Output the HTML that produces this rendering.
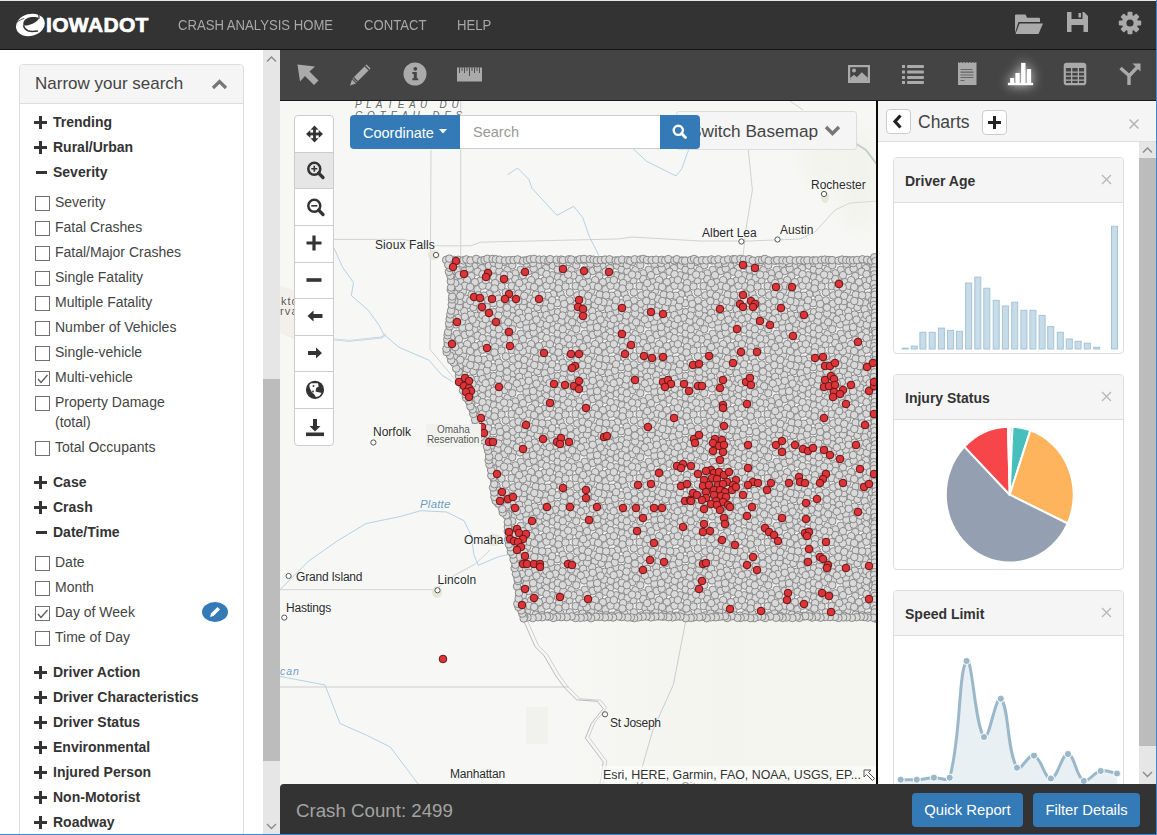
<!DOCTYPE html>
<html><head><meta charset="utf-8">
<style>
*{box-sizing:border-box}
html,body{margin:0;padding:0;width:1157px;height:835px;overflow:hidden;background:#fff;font-family:"Liberation Sans",sans-serif;color:#333}
.abs{position:absolute}
#topline{left:0;top:0;width:1157px;height:1px;background:#e6e6e6}
#header{left:0;top:1px;width:1156px;height:49px;background:#333;border-bottom:1px solid #141414}
#rline{left:1156px;top:0;width:1px;height:835px;background:#3d86d6}
#bline{left:0;top:834px;width:1157px;height:1px;background:#3d86d6}
.nav{top:16px;font-size:15px;line-height:17px;color:#a8a8a8;white-space:nowrap;transform:scaleX(0.875);transform-origin:0 0}
#toolbar{left:280px;top:50px;width:876px;height:51px;background:#444;border-bottom:1px solid #1a1a1a}
#sidebar{left:0;top:50px;width:263px;height:784px;background:#fff}
#sscroll{left:263px;top:50px;width:17px;height:784px;background:#e6e6e6}
#sthumb{left:263px;top:379px;width:17px;height:382px;background:#bcbcbc}
#panel{left:19px;top:64px;width:225px;height:790px;border:1px solid #ddd;border-radius:4px;background:#fff}
#phead{left:20px;top:65px;width:223px;height:39px;background:#f5f5f5;border-bottom:1px solid #ddd;border-radius:3px 3px 0 0}
.grp{font-size:14px;line-height:16px;font-weight:bold;color:#333;white-space:nowrap}
.chk{font-size:14px;line-height:16px;color:#444;white-space:nowrap}
.cb{width:15px;height:15px;border:1px solid #707070;background:#fff}
#map{left:280px;top:101px;width:596px;height:684px;background:#f7f7f5;overflow:hidden}
#rpanel{left:876px;top:101px;width:280px;height:684px;background:#fff;border-left:2px solid #0a0a0a}
#bottom{left:280px;top:784px;width:876px;height:50px;background:#333;border-radius:4px 0 0 0}
.tool{fill:#a9a9a9}
.mbtn{left:294px;width:40px;height:37px;background:#fff;border:1px solid #ccc}
.chart{left:893px;width:231px;background:#fff;border:1px solid #ddd;border-radius:4px;overflow:hidden}
.chead{height:45px;background:#f5f5f5;border-bottom:1px solid #ddd;position:relative}
.ctitle{position:absolute;left:11px;top:15px;font-size:14px;line-height:16px;font-weight:bold;color:#333;white-space:nowrap}
.cx{position:absolute;right:11px;top:16px}
.btn{top:793px;height:34px;background:#337ab7;border-radius:4px;color:#fff;font-size:14.8px;line-height:34px;text-align:center;white-space:nowrap}
</style></head><body>
<div id="topline" class="abs"></div>
<div id="header" class="abs"></div>
<svg class="abs" style="left:14px;top:12px" width="33" height="27" viewBox="0 0 33 27">
<ellipse cx="16.4" cy="12.95" rx="14.6" ry="11" transform="rotate(-15 16.4 12.95)" fill="#fff"/>
<path d="M9.4 13.6 C8.8 9 11 6.5 16 5.3 C19 4.8 23 5 25 5.9 C24.2 8 22.5 9.6 20 10.9 C17.5 12.3 14.5 13.4 9.4 13.6 Z" fill="#333"/>
<path d="M9.4 13.4 C10 15.5 11.5 17.8 14 18.8 C16.5 19.7 20 19.5 24 18.9" fill="none" stroke="#333" stroke-width="1.5"/>
<path d="M2 11.1 C5 8.5 7.5 7 10.3 6.4" fill="none" stroke="#333" stroke-width="0.8"/>
<path d="M24.1 1.8 C25.2 3.5 25.3 5.2 25 6.8" fill="none" stroke="#333" stroke-width="1.1"/>
</svg>
<div class="abs" style="left:46px;top:13px;font-size:21px;line-height:23px;font-weight:bold;color:#fff;letter-spacing:0.35px;white-space:nowrap;-webkit-text-stroke:0.7px #fff">IOWADOT</div>

<div class="abs nav" style="left:178px">CRASH ANALYSIS HOME</div>
<div class="abs nav" style="left:364px">CONTACT</div>
<div class="abs nav" style="left:457px">HELP</div>
<svg class="abs" style="left:1014px;top:13px" width="30" height="22" viewBox="0 0 30 22">
<path d="M1 2.5 L1 20 L4.5 9 L26 9 L26 6 C26 5.2 25.5 4.8 24.8 4.8 L13 4.8 L11.5 1.5 L2.2 1.5 C1.5 1.5 1 2 1 2.5 Z" fill="#aaa"/>
<path d="M5.5 10.5 L29 10.5 L24.5 21 L1.5 21 Z" fill="#aaa"/>
</svg>
<svg class="abs" style="left:1066px;top:11px" width="23" height="22" viewBox="0 0 23 22">
<path d="M1 1 L18 1 L22 5 L22 21 L1 21 Z" fill="#aaa"/>
<rect x="5.5" y="1" width="11" height="7" fill="#333"/>
<rect x="12.5" y="2" width="2.5" height="4.5" fill="#aaa"/>
<rect x="5.5" y="14" width="12" height="7" fill="#333"/>
</svg>
<svg class="abs" style="left:1118px;top:11px" width="24" height="24" viewBox="0 0 24 24">
<g fill="#aaa"><circle cx="12" cy="12" r="8"/>
<g id="teeth"><rect x="9.5" y="0.8" width="5" height="5" rx="1"/><rect x="9.5" y="18.2" width="5" height="5" rx="1"/><rect x="0.8" y="9.5" width="5" height="5" rx="1"/><rect x="18.2" y="9.5" width="5" height="5" rx="1"/></g>
<g transform="rotate(45 12 12)"><rect x="9.5" y="0.8" width="5" height="5" rx="1"/><rect x="9.5" y="18.2" width="5" height="5" rx="1"/><rect x="0.8" y="9.5" width="5" height="5" rx="1"/><rect x="18.2" y="9.5" width="5" height="5" rx="1"/></g>
</g><circle cx="12" cy="12" r="3.6" fill="#333"/>
</svg>


<div id="sidebar" class="abs"></div>
<div id="panel" class="abs"></div>
<div id="phead" class="abs"></div>
<div class="abs" style="left:35px;top:74px;font-size:17px;line-height:20px;color:#444;white-space:nowrap">Narrow your search</div>
<svg class="abs" style="left:211px;top:78px" width="17" height="12" viewBox="0 0 17 12"><path d="M2 10 L8.5 3.5 L15 10" fill="none" stroke="#777" stroke-width="3.2"/></svg>
<svg class="abs" style="left:34px;top:115.5px" width="13" height="13" viewBox="0 0 13 13"><rect x="0" y="5" width="13" height="3" fill="#333"/><rect x="5" y="0" width="3" height="13" fill="#333"/></svg><div class="abs grp" style="left:53px;top:114px">Trending</div>
<svg class="abs" style="left:34px;top:140.5px" width="13" height="13" viewBox="0 0 13 13"><rect x="0" y="5" width="13" height="3" fill="#333"/><rect x="5" y="0" width="3" height="13" fill="#333"/></svg><div class="abs grp" style="left:53px;top:139px">Rural/Urban</div>
<svg class="abs" style="left:36px;top:165.5px" width="11" height="13" viewBox="0 0 11 13"><rect x="0" y="5" width="11" height="3" fill="#333"/></svg><div class="abs grp" style="left:53px;top:164px">Severity</div>
<div class="abs cb" style="left:35px;top:196px"></div><div class="abs chk" style="left:55px;top:194px">Severity</div>
<div class="abs cb" style="left:35px;top:221px"></div><div class="abs chk" style="left:55px;top:219px">Fatal Crashes</div>
<div class="abs cb" style="left:35px;top:246px"></div><div class="abs chk" style="left:55px;top:244px">Fatal/Major Crashes</div>
<div class="abs cb" style="left:35px;top:271px"></div><div class="abs chk" style="left:55px;top:269px">Single Fatality</div>
<div class="abs cb" style="left:35px;top:296px"></div><div class="abs chk" style="left:55px;top:294px">Multiple Fatality</div>
<div class="abs cb" style="left:35px;top:321px"></div><div class="abs chk" style="left:55px;top:319px">Number of Vehicles</div>
<div class="abs cb" style="left:35px;top:346px"></div><div class="abs chk" style="left:55px;top:344px">Single-vehicle</div>
<div class="abs cb" style="left:35px;top:371px"></div><svg class="abs" style="left:36px;top:372px" width="13" height="13" viewBox="0 0 13 13"><path d="M2 7 L5 10.5 L11.5 3" fill="none" stroke="#555" stroke-width="1.2"/></svg><div class="abs chk" style="left:55px;top:369px">Multi-vehicle</div>
<div class="abs cb" style="left:35px;top:396px"></div><div class="abs chk" style="left:55px;top:394px">Property Damage</div>
<div class="abs cb" style="left:35px;top:441px"></div><div class="abs chk" style="left:55px;top:439px">Total Occupants</div>
<div class="abs chk" style="left:55px;top:414px">(total)</div>
<svg class="abs" style="left:34px;top:475.5px" width="13" height="13" viewBox="0 0 13 13"><rect x="0" y="5" width="13" height="3" fill="#333"/><rect x="5" y="0" width="3" height="13" fill="#333"/></svg><div class="abs grp" style="left:53px;top:474px">Case</div>
<svg class="abs" style="left:34px;top:500.5px" width="13" height="13" viewBox="0 0 13 13"><rect x="0" y="5" width="13" height="3" fill="#333"/><rect x="5" y="0" width="3" height="13" fill="#333"/></svg><div class="abs grp" style="left:53px;top:499px">Crash</div>
<svg class="abs" style="left:36px;top:525.5px" width="11" height="13" viewBox="0 0 11 13"><rect x="0" y="5" width="11" height="3" fill="#333"/></svg><div class="abs grp" style="left:53px;top:524px">Date/Time</div>
<div class="abs cb" style="left:35px;top:556px"></div><div class="abs chk" style="left:55px;top:554px">Date</div>
<div class="abs cb" style="left:35px;top:581px"></div><div class="abs chk" style="left:55px;top:579px">Month</div>
<div class="abs cb" style="left:35px;top:606px"></div><svg class="abs" style="left:36px;top:607px" width="13" height="13" viewBox="0 0 13 13"><path d="M2 7 L5 10.5 L11.5 3" fill="none" stroke="#555" stroke-width="1.2"/></svg><div class="abs chk" style="left:55px;top:604px">Day of Week</div>
<div class="abs cb" style="left:35px;top:631px"></div><div class="abs chk" style="left:55px;top:629px">Time of Day</div>
<svg class="abs" style="left:34px;top:665.5px" width="13" height="13" viewBox="0 0 13 13"><rect x="0" y="5" width="13" height="3" fill="#333"/><rect x="5" y="0" width="3" height="13" fill="#333"/></svg><div class="abs grp" style="left:53px;top:664px">Driver Action</div>
<svg class="abs" style="left:34px;top:690.5px" width="13" height="13" viewBox="0 0 13 13"><rect x="0" y="5" width="13" height="3" fill="#333"/><rect x="5" y="0" width="3" height="13" fill="#333"/></svg><div class="abs grp" style="left:53px;top:689px">Driver Characteristics</div>
<svg class="abs" style="left:34px;top:715.5px" width="13" height="13" viewBox="0 0 13 13"><rect x="0" y="5" width="13" height="3" fill="#333"/><rect x="5" y="0" width="3" height="13" fill="#333"/></svg><div class="abs grp" style="left:53px;top:714px">Driver Status</div>
<svg class="abs" style="left:34px;top:740.5px" width="13" height="13" viewBox="0 0 13 13"><rect x="0" y="5" width="13" height="3" fill="#333"/><rect x="5" y="0" width="3" height="13" fill="#333"/></svg><div class="abs grp" style="left:53px;top:739px">Environmental</div>
<svg class="abs" style="left:34px;top:765.5px" width="13" height="13" viewBox="0 0 13 13"><rect x="0" y="5" width="13" height="3" fill="#333"/><rect x="5" y="0" width="3" height="13" fill="#333"/></svg><div class="abs grp" style="left:53px;top:764px">Injured Person</div>
<svg class="abs" style="left:34px;top:790.5px" width="13" height="13" viewBox="0 0 13 13"><rect x="0" y="5" width="13" height="3" fill="#333"/><rect x="5" y="0" width="3" height="13" fill="#333"/></svg><div class="abs grp" style="left:53px;top:789px">Non-Motorist</div>
<svg class="abs" style="left:34px;top:815.5px" width="13" height="13" viewBox="0 0 13 13"><rect x="0" y="5" width="13" height="3" fill="#333"/><rect x="5" y="0" width="3" height="13" fill="#333"/></svg><div class="abs grp" style="left:53px;top:814px">Roadway</div>

<div class="abs" style="left:202px;top:602px;width:26px;height:20px;border-radius:50%;background:#337ab7"></div>
<svg class="abs" style="left:207px;top:604px" width="16" height="16" viewBox="0 0 16 16"><path d="M3 13 L4 9.5 L10.5 3 L13 5.5 L6.5 12 Z" fill="#fff"/></svg>
<div id="sscroll" class="abs"></div>
<div id="sthumb" class="abs"></div>
<svg class="abs" style="left:263px;top:52px" width="17" height="14" viewBox="0 0 17 14"><path d="M4 9.5 L8.5 5 L13 9.5" fill="none" stroke="#888" stroke-width="1.3"/></svg>
<svg class="abs" style="left:263px;top:819px" width="17" height="14" viewBox="0 0 17 14"><path d="M4 5 L8.5 9.5 L13 5" fill="none" stroke="#888" stroke-width="1.3"/></svg>

<div id="toolbar" class="abs"></div>
<svg class="abs" style="left:296px;top:63px" width="24" height="24" viewBox="0 0 24 24">
<path d="M1.5 1.5 L19 3.5 L13.5 8.5 L22.5 17.5 L18 22 L9 13 L4 18.5 Z" fill="#aaa"/>
</svg>
<svg class="abs" style="left:349px;top:62px" width="25" height="25" viewBox="0 0 25 25">
<path d="M17.5 2.5 L21.5 6.5 L7.5 20.5 L3.5 16.5 Z" fill="#aaa"/>
<path d="M3 17.5 L7 21.5 L1 23.5 Z" fill="#aaa"/>
<path d="M16 4 L20 8" stroke="#444" stroke-width="1.2"/>
<path d="M4.5 15.5 L8.5 19.5" stroke="#444" stroke-width="1.2"/>
</svg>
<svg class="abs" style="left:403px;top:62px" width="24" height="24" viewBox="0 0 24 24">
<circle cx="12" cy="12" r="11.5" fill="#aaa"/>
<circle cx="12.3" cy="6.8" r="1.9" fill="#444"/>
<path d="M9.3 10 L13.8 10 L13.8 16.3 L15.2 16.3 L15.2 18.3 L9.3 18.3 L9.3 16.3 L10.8 16.3 L10.8 12 L9.3 12 Z" fill="#444"/>
</svg>
<svg class="abs" style="left:456px;top:66px" width="27" height="17" viewBox="0 0 27 17">
<rect x="1" y="1.5" width="25" height="14" fill="#aaa"/>
<g stroke="#444" stroke-width="0.9"><path d="M3.5 1.5 V7 M6 1.5 V5 M8.5 1.5 V7 M11 1.5 V5 M13.5 1.5 V10 M16 1.5 V5 M18.5 1.5 V7 M21 1.5 V5 M23.5 1.5 V7"/></g>
</svg>
<svg class="abs" style="left:848px;top:65px" width="22" height="18" viewBox="0 0 22 18">
<rect x="1.1" y="1.1" width="19.8" height="15.8" fill="none" stroke="#aaa" stroke-width="2.2"/>
<circle cx="6" cy="5.6" r="2" fill="#aaa"/>
<path d="M2.2 16 L2.2 13 L6 9.8 L8.8 12.2 L13.8 7.2 L19.8 12.8 L19.8 16 Z" fill="#aaa"/>
</svg>
<svg class="abs" style="left:901px;top:64px" width="24" height="21" viewBox="0 0 24 21">
<g fill="#aaa"><rect x="1" y="1" width="3" height="3"/><rect x="1" y="6.5" width="3" height="3"/><rect x="1" y="12" width="3" height="3"/><rect x="1" y="17" width="3" height="3"/>
<rect x="6" y="1" width="17" height="3" rx="1"/><rect x="6" y="6.5" width="17" height="3" rx="1"/><rect x="6" y="12" width="17" height="3" rx="1"/><rect x="6" y="17" width="17" height="3" rx="1"/></g>
</svg>
<svg class="abs" style="left:957px;top:61px" width="21" height="25" viewBox="0 0 21 25">
<path d="M1 1 L2.5 2 L4 1 L5.5 2 L7 1 L8.5 2 L10 1 L11.5 2 L13 1 L14.5 2 L16 1 L17.5 2 L19 1 L19.5 1.5 L19.5 24 L1 24 Z" fill="#aaa"/>
<g fill="#666"><rect x="3.5" y="8" width="12" height="1"/><rect x="3.5" y="10.5" width="13" height="1.3"/><rect x="3.5" y="13.5" width="13" height="1"/><rect x="3.5" y="16" width="13" height="1"/><rect x="3.5" y="19" width="4" height="1"/></g>
</svg>
<svg class="abs" style="left:993px;top:51px" width="55" height="49" viewBox="0 3 55 49">
<defs><filter id="glow" x="-60%" y="-60%" width="220%" height="220%"><feGaussianBlur stdDeviation="6"/></filter></defs>
<g filter="url(#glow)" fill="#fff" opacity="0.9"><rect x="17" y="30" width="4.2" height="6"/><rect x="22.4" y="25" width="4.2" height="11"/><rect x="28.1" y="15" width="4.2" height="21"/><rect x="33.8" y="21" width="4.2" height="15"/><rect x="15" y="34.8" width="25.2" height="2.4"/></g>
<g fill="#fff"><rect x="17.1" y="30" width="4.1" height="6"/><rect x="22.4" y="25" width="4.3" height="11"/><rect x="28.1" y="14.9" width="4.4" height="21"/><rect x="33.8" y="21.1" width="4.3" height="15"/><rect x="14.9" y="34.8" width="25.2" height="2.4"/></g>
</svg>
<svg class="abs" style="left:1063px;top:62px" width="24" height="24" viewBox="0 0 24 24">
<rect x="1.8" y="1.8" width="20.4" height="20.4" rx="2" fill="none" stroke="#aaa" stroke-width="2.2"/>
<rect x="2" y="2" width="20" height="4" fill="#aaa"/>
<g fill="#aaa"><rect x="2" y="9.5" width="20" height="1.3"/><rect x="2" y="13.5" width="20" height="1.3"/><rect x="2" y="17.5" width="20" height="1.3"/><rect x="8" y="5" width="1.3" height="17"/><rect x="14.7" y="5" width="1.3" height="17"/></g>
</svg>
<svg class="abs" style="left:1118px;top:62px" width="24" height="24" viewBox="0 0 24 24">
<path d="M2.5 6 L11 13.5 L11 23" fill="none" stroke="#aaa" stroke-width="3.4"/>
<path d="M11 14 L20 4.5" fill="none" stroke="#aaa" stroke-width="3.4"/>
<path d="M14.5 1.5 L22.5 1.5 L22.5 9.5 Z" fill="#aaa"/>
</svg>

<div id="map" class="abs"><svg class="abs" style="left:0;top:0" width="596" height="684" viewBox="280 101 596 684"><defs><pattern id="gp" width="64" height="64" patternUnits="userSpaceOnUse"><rect width="64" height="64" fill="#f2f2f2"/><g fill="#d9d9d9" stroke="#858585" stroke-width="0.95"><circle cx="15.2" cy="34.8" r="3.75"/><circle cx="23.7" cy="38.7" r="3.75"/><circle cx="40.0" cy="4.2" r="3.75"/><circle cx="0.8" cy="53.6" r="3.75"/><circle cx="64.8" cy="53.6" r="3.75"/><circle cx="16.6" cy="15.0" r="3.75"/><circle cx="-0.3" cy="30.1" r="3.75"/><circle cx="63.7" cy="30.1" r="3.75"/><circle cx="53.5" cy="30.5" r="3.75"/><circle cx="40.9" cy="9.6" r="3.75"/><circle cx="40.6" cy="55.6" r="3.75"/><circle cx="33.5" cy="47.4" r="3.75"/><circle cx="48.5" cy="37.8" r="3.75"/><circle cx="19.3" cy="2.0" r="3.75"/><circle cx="19.3" cy="66.0" r="3.75"/><circle cx="46.0" cy="56.2" r="3.75"/><circle cx="25.3" cy="51.3" r="3.75"/><circle cx="28.5" cy="59.9" r="3.75"/><circle cx="56.2" cy="6.2" r="3.75"/><circle cx="8.7" cy="13.9" r="3.75"/><circle cx="40.1" cy="19.3" r="3.75"/><circle cx="32.5" cy="24.7" r="3.75"/><circle cx="54.8" cy="-0.6" r="3.75"/><circle cx="54.8" cy="63.4" r="3.75"/><circle cx="57.9" cy="36.4" r="3.75"/><circle cx="45.7" cy="13.5" r="3.75"/><circle cx="5.7" cy="51.2" r="3.75"/><circle cx="26.3" cy="9.6" r="3.75"/><circle cx="18.8" cy="49.2" r="3.75"/><circle cx="46.0" cy="21.2" r="3.75"/><circle cx="32.3" cy="-0.1" r="3.75"/><circle cx="32.3" cy="63.9" r="3.75"/><circle cx="12.6" cy="26.1" r="3.75"/><circle cx="57.4" cy="24.2" r="3.75"/><circle cx="29.5" cy="33.3" r="3.75"/><circle cx="41.2" cy="38.1" r="3.75"/><circle cx="35.8" cy="39.7" r="3.75"/><circle cx="27.6" cy="46.1" r="3.75"/><circle cx="1.3" cy="39.4" r="3.75"/><circle cx="65.3" cy="39.4" r="3.75"/><circle cx="40.1" cy="29.8" r="3.75"/><circle cx="45.2" cy="47.2" r="3.75"/><circle cx="1.4" cy="3.9" r="3.75"/><circle cx="1.4" cy="67.9" r="3.75"/><circle cx="65.4" cy="3.9" r="3.75"/><circle cx="65.4" cy="67.9" r="3.75"/><circle cx="43.3" cy="-2.3" r="3.75"/><circle cx="43.3" cy="61.7" r="3.75"/><circle cx="23.3" cy="20.0" r="3.75"/><circle cx="19.2" cy="24.1" r="3.75"/><circle cx="49.4" cy="1.7" r="3.75"/><circle cx="49.4" cy="65.7" r="3.75"/><circle cx="51.4" cy="15.3" r="3.75"/><circle cx="14.4" cy="7.7" r="3.75"/><circle cx="33.9" cy="12.2" r="3.75"/><circle cx="51.6" cy="53.7" r="3.75"/><circle cx="51.6" cy="22.1" r="3.75"/><circle cx="26.9" cy="26.2" r="3.75"/><circle cx="0.3" cy="-3.6" r="3.75"/><circle cx="0.3" cy="60.4" r="3.75"/><circle cx="64.3" cy="-3.6" r="3.75"/><circle cx="64.3" cy="60.4" r="3.75"/><circle cx="59.4" cy="14.2" r="3.75"/><circle cx="57.8" cy="44.4" r="3.75"/><circle cx="59.1" cy="57.4" r="3.75"/><circle cx="0.8" cy="47.7" r="3.75"/><circle cx="64.8" cy="47.7" r="3.75"/><circle cx="11.0" cy="19.2" r="3.75"/><circle cx="16.2" cy="55.1" r="3.75"/><circle cx="11.0" cy="50.7" r="3.75"/><circle cx="59.0" cy="51.6" r="3.75"/><circle cx="3.2" cy="17.4" r="3.75"/><circle cx="67.2" cy="17.4" r="3.75"/><circle cx="8.0" cy="4.4" r="3.75"/><circle cx="5.5" cy="32.1" r="3.75"/><circle cx="29.5" cy="15.7" r="3.75"/><circle cx="16.8" cy="29.7" r="3.75"/><circle cx="50.7" cy="42.7" r="3.75"/><circle cx="6.6" cy="37.6" r="3.75"/><circle cx="0.3" cy="9.2" r="3.75"/><circle cx="64.3" cy="9.2" r="3.75"/><circle cx="45.8" cy="6.8" r="3.75"/><circle cx="13.9" cy="1.5" r="3.75"/><circle cx="13.9" cy="65.5" r="3.75"/><circle cx="12.0" cy="45.1" r="3.75"/><circle cx="17.6" cy="42.6" r="3.75"/><circle cx="7.2" cy="56.8" r="3.75"/><circle cx="52.2" cy="47.9" r="3.75"/><circle cx="3.2" cy="23.0" r="3.75"/><circle cx="67.2" cy="23.0" r="3.75"/><circle cx="10.8" cy="31.4" r="3.75"/><circle cx="-3.8" cy="2.2" r="3.75"/><circle cx="-3.8" cy="66.2" r="3.75"/><circle cx="60.2" cy="2.2" r="3.75"/><circle cx="60.2" cy="66.2" r="3.75"/><circle cx="38.7" cy="50.5" r="3.75"/><circle cx="34.5" cy="29.7" r="3.75"/><circle cx="22.2" cy="31.0" r="3.75"/><circle cx="47.1" cy="27.1" r="3.75"/><circle cx="32.6" cy="53.2" r="3.75"/><circle cx="22.6" cy="58.6" r="3.75"/><circle cx="34.5" cy="59.0" r="3.75"/><circle cx="34.5" cy="18.2" r="3.75"/><circle cx="28.3" cy="3.6" r="3.75"/><circle cx="28.3" cy="67.6" r="3.75"/><circle cx="6.3" cy="45.0" r="3.75"/><circle cx="21.7" cy="12.6" r="3.75"/><circle cx="9.9" cy="-2.0" r="3.75"/><circle cx="9.9" cy="62.0" r="3.75"/><circle cx="50.5" cy="59.5" r="3.75"/><circle cx="30.2" cy="39.3" r="3.75"/><circle cx="46.4" cy="32.5" r="3.75"/><circle cx="34.7" cy="4.8" r="3.75"/><circle cx="40.1" cy="44.2" r="3.75"/><circle cx="4.8" cy="-0.5" r="3.75"/><circle cx="4.8" cy="63.5" r="3.75"/><circle cx="-2.6" cy="19.4" r="3.75"/><circle cx="61.4" cy="19.4" r="3.75"/><circle cx="21.1" cy="7.1" r="3.75"/><circle cx="22.3" cy="45.0" r="3.75"/><circle cx="37.8" cy="24.1" r="3.75"/><circle cx="16.8" cy="-3.2" r="3.75"/><circle cx="16.8" cy="60.8" r="3.75"/><circle cx="37.7" cy="-0.8" r="3.75"/><circle cx="37.7" cy="63.2" r="3.75"/><circle cx="50.8" cy="9.2" r="3.75"/><circle cx="24.5" cy="-0.3" r="3.75"/><circle cx="24.5" cy="63.7" r="3.75"/><circle cx="56.1" cy="18.6" r="3.75"/><circle cx="12.2" cy="39.8" r="3.75"/><circle cx="7.2" cy="27.1" r="3.75"/></g></pattern></defs><defs><linearGradient id="gg" x1="0" y1="0" x2="1" y2="0"><stop offset="0" stop-color="#eef1e6" stop-opacity="0"/><stop offset="0.5" stop-color="#eef1e6" stop-opacity="0.5"/><stop offset="1" stop-color="#eef1e6" stop-opacity="0.4"/></linearGradient></defs><rect x="560" y="620" width="320" height="170" fill="url(#gg)"/><path d="M460.7 101.0 L460.7 257.0" fill="none" stroke="#d2d2d2" stroke-width="1.0" stroke-linejoin="round" /><path d="M431.0 150.0 L430.0 349.4 L457.0 381.7" fill="none" stroke="#d2d2d2" stroke-width="1.0" stroke-linejoin="round" /><path d="M334.0 239.4 L403.0 239.4 L433.3 245.9 L460.0 245.9 L471.5 245.6 L480.4 242.2 L619.8 238.9 L631.0 237.0 L664.7 238.9 L700.0 241.0 L750.0 241.0 L800.0 239.0 L815.0 232.0 L835.0 210.0 L850.0 203.0 L878.0 201.0" fill="none" stroke="#d2d2d2" stroke-width="1.0" stroke-linejoin="round" /><path d="M748.3 150.0 L752.4 190.0 L745.8 230.0 L742.6 260.0" fill="none" stroke="#d2d2d2" stroke-width="1.0" stroke-linejoin="round" /><path d="M280.0 589.7 L435.0 589.7 L455.0 575.0 L475.5 563.8 L490.0 550.0" fill="none" stroke="#d2d2d2" stroke-width="1.0" stroke-linejoin="round" /><path d="M280.0 687.0 L569.0 687.0" fill="none" stroke="#cdcdcd" stroke-width="1.0" stroke-linejoin="round" /><path d="M686.0 619.5 L673.4 684.5 L652.6 731.0 L637.0 785.0" fill="none" stroke="#cccccc" stroke-width="1.0" stroke-linejoin="round" /><path d="M523.3 620.0 L535.0 646.6 L544.0 655.5 L555.9 676.0 L564.7 688.0 L576.6 699.8 L597.3 701.3 L603.2 708.7 L591.3 723.5 L585.4 738.2 L603.2 761.9 L600.0 785.0" fill="none" stroke="#b8bcc0" stroke-width="1.0" stroke-linejoin="round" /><path d="M526.8 619.0 L538.5 645.6 L547.5 654.5 L559.4 675.0 L568.2 687.0 L580.1 698.8 L600.8 700.3 L606.7 707.7 L594.8 722.5 L588.9 737.2 L606.7 760.9 L603.5 784.0" fill="none" stroke="#c8cacc" stroke-width="0.9" stroke-linejoin="round" /><rect x="526" y="707" width="22" height="37" fill="#f1f1ee"/><path d="M334.0 248.0 L342.7 267.4 L353.5 282.5 L351.3 295.5 L368.6 310.6 L379.4 325.7 L383.7 334.3 L398.8 347.2 L429.0 360.2 L442.0 375.3 L452.7 381.7" fill="none" stroke="#b3d3e3" stroke-width="1.0" stroke-linejoin="round" /><path d="M278.0 330.0 L294.2 337.5 L336.2 339.7 L349.2 340.8 L381.5 337.5 L385.8 334.3" fill="none" stroke="#b9cdd8" stroke-width="1.8" stroke-linejoin="round" /><path d="M278.0 330.0 L294.2 337.5 L336.2 339.7 L349.2 340.8 L381.5 337.5 L385.8 334.3" fill="none" stroke="#f7f7f5" stroke-width="0.6" stroke-linejoin="round" /><path d="M280.0 589.7 L308.7 561.0 L337.5 540.8 L366.0 523.6 L400.7 516.4 L420.8 510.7 L446.7 512.0 L464.0 520.7 L471.0 535.0 L474.0 555.0 L478.3 565.3 L498.5 556.7 L520.0 552.0" fill="none" stroke="#b3d3e3" stroke-width="1.0" stroke-linejoin="round" /><path d="M278.0 676.0 L325.0 685.0 L340.0 723.5 L366.7 735.3 L390.3 747.0 L417.0 782.6 L420.0 786.0" fill="none" stroke="#b3d3e3" stroke-width="1.0" stroke-linejoin="round" /><path d="M507.4 174.8 L517.5 168.0 L528.8 179.3 L532.0 188.3 L556.9 215.3 L573.7 206.3 L582.7 217.5 L589.4 236.6 L599.5 256.9" fill="none" stroke="#b3d3e3" stroke-width="1.0" stroke-linejoin="round" /><path d="M633.3 149.0 L646.7 161.3 L676.0 176.0 L681.6 169.2 L687.2 153.5 L689.4 148.0 L700.0 120.0" fill="none" stroke="#b3d3e3" stroke-width="1.0" stroke-linejoin="round" /><path d="M855.0 143.0 L866.0 150.0 L872.0 158.0 L878.0 166.0" fill="none" stroke="#b5bfc6" stroke-width="1.8" stroke-linejoin="round" /><path d="M790.0 101.0 L803.0 110.0" fill="none" stroke="#d2d2d2" stroke-width="1.0" stroke-linejoin="round" /><defs><filter id="bl" x="-50%" y="-50%" width="200%" height="200%"><feGaussianBlur stdDeviation="10"/></filter></defs><g fill="#e6ebd9" opacity="0.35" filter="url(#bl)"><ellipse cx="858" cy="180" rx="20" ry="50"/><ellipse cx="820" cy="160" rx="15" ry="25"/></g><g fill="#e8e6d8"><ellipse cx="434" cy="255" rx="6" ry="5"/><ellipse cx="825" cy="197" rx="4" ry="6"/><ellipse cx="437" cy="592" rx="5" ry="6"/><ellipse cx="494" cy="540" rx="9" ry="6"/></g><path d="M278 285 L294 290 L294 338 L278 332 Z" fill="#f1f0ea"/><path d="M445.0 256.5 L878.0 256.5 L878.0 620.5 L521.4 620.5 L514.9 604.5 L514.9 588.6 L510.9 562.3 L505.6 541.2 L504.3 520.0 L491.1 499.0 L489.8 480.6 L483.2 443.7 L477.5 440.0 L471.5 417.2 L461.9 395.7 L455.9 374.1 L442.8 350.2 L448.7 302.0 L447.5 283.0 Z" fill="url(#gp)"/><g fill="#d9d9d9" stroke="#858585" stroke-width="0.95"><circle cx="446.1" cy="259.9" r="3.75"/><circle cx="451.5" cy="259.7" r="3.75"/><circle cx="454.7" cy="260.0" r="3.75"/><circle cx="458.1" cy="259.8" r="3.75"/><circle cx="463.4" cy="260.4" r="3.75"/><circle cx="466.3" cy="259.4" r="3.75"/><circle cx="470.5" cy="260.4" r="3.75"/><circle cx="476.2" cy="258.9" r="3.75"/><circle cx="481.1" cy="260.7" r="3.75"/><circle cx="484.5" cy="260.0" r="3.75"/><circle cx="487.4" cy="258.8" r="3.75"/><circle cx="492.6" cy="258.9" r="3.75"/><circle cx="495.9" cy="259.3" r="3.75"/><circle cx="499.7" cy="259.7" r="3.75"/><circle cx="505.0" cy="260.5" r="3.75"/><circle cx="509.4" cy="260.1" r="3.75"/><circle cx="513.5" cy="260.1" r="3.75"/><circle cx="517.6" cy="259.4" r="3.75"/><circle cx="523.2" cy="260.8" r="3.75"/><circle cx="527.0" cy="260.2" r="3.75"/><circle cx="529.9" cy="259.3" r="3.75"/><circle cx="534.0" cy="258.9" r="3.75"/><circle cx="539.4" cy="259.6" r="3.75"/><circle cx="543.8" cy="259.6" r="3.75"/><circle cx="548.3" cy="260.5" r="3.75"/><circle cx="550.1" cy="259.2" r="3.75"/><circle cx="556.6" cy="259.7" r="3.75"/><circle cx="561.0" cy="259.6" r="3.75"/><circle cx="562.9" cy="260.1" r="3.75"/><circle cx="568.9" cy="259.3" r="3.75"/><circle cx="571.3" cy="259.5" r="3.75"/><circle cx="577.8" cy="260.3" r="3.75"/><circle cx="579.8" cy="259.3" r="3.75"/><circle cx="584.0" cy="258.9" r="3.75"/><circle cx="589.9" cy="259.2" r="3.75"/><circle cx="593.5" cy="259.7" r="3.75"/><circle cx="596.8" cy="260.3" r="3.75"/><circle cx="600.9" cy="260.1" r="3.75"/><circle cx="605.0" cy="259.6" r="3.75"/><circle cx="609.5" cy="259.3" r="3.75"/><circle cx="615.6" cy="260.4" r="3.75"/><circle cx="618.1" cy="260.6" r="3.75"/><circle cx="622.1" cy="259.6" r="3.75"/><circle cx="627.9" cy="260.1" r="3.75"/><circle cx="630.2" cy="260.8" r="3.75"/><circle cx="634.7" cy="259.3" r="3.75"/><circle cx="640.3" cy="259.5" r="3.75"/><circle cx="643.3" cy="258.9" r="3.75"/><circle cx="647.0" cy="260.0" r="3.75"/><circle cx="651.6" cy="260.0" r="3.75"/><circle cx="656.1" cy="259.7" r="3.75"/><circle cx="661.8" cy="259.8" r="3.75"/><circle cx="665.1" cy="260.5" r="3.75"/><circle cx="668.3" cy="259.1" r="3.75"/><circle cx="674.3" cy="260.4" r="3.75"/><circle cx="676.8" cy="259.2" r="3.75"/><circle cx="682.3" cy="260.7" r="3.75"/><circle cx="685.1" cy="260.7" r="3.75"/><circle cx="691.1" cy="260.0" r="3.75"/><circle cx="694.1" cy="259.0" r="3.75"/><circle cx="697.3" cy="260.7" r="3.75"/><circle cx="702.0" cy="260.2" r="3.75"/><circle cx="706.3" cy="260.4" r="3.75"/><circle cx="711.3" cy="259.4" r="3.75"/><circle cx="714.5" cy="260.2" r="3.75"/><circle cx="718.4" cy="259.3" r="3.75"/><circle cx="723.9" cy="260.5" r="3.75"/><circle cx="728.2" cy="259.4" r="3.75"/><circle cx="733.2" cy="259.2" r="3.75"/><circle cx="735.1" cy="259.3" r="3.75"/><circle cx="740.4" cy="258.9" r="3.75"/><circle cx="743.9" cy="259.5" r="3.75"/><circle cx="749.1" cy="259.1" r="3.75"/><circle cx="752.8" cy="260.6" r="3.75"/><circle cx="758.6" cy="260.1" r="3.75"/><circle cx="762.0" cy="260.0" r="3.75"/><circle cx="764.8" cy="258.9" r="3.75"/><circle cx="768.7" cy="260.6" r="3.75"/><circle cx="774.7" cy="260.7" r="3.75"/><circle cx="777.2" cy="260.1" r="3.75"/><circle cx="782.5" cy="260.3" r="3.75"/><circle cx="786.3" cy="260.8" r="3.75"/><circle cx="789.9" cy="259.9" r="3.75"/><circle cx="795.8" cy="260.6" r="3.75"/><circle cx="800.0" cy="260.2" r="3.75"/><circle cx="804.3" cy="260.6" r="3.75"/><circle cx="807.4" cy="260.2" r="3.75"/><circle cx="813.0" cy="260.5" r="3.75"/><circle cx="816.0" cy="260.4" r="3.75"/><circle cx="821.3" cy="259.9" r="3.75"/><circle cx="824.9" cy="259.6" r="3.75"/><circle cx="829.0" cy="260.0" r="3.75"/><circle cx="832.0" cy="260.1" r="3.75"/><circle cx="838.5" cy="260.6" r="3.75"/><circle cx="842.0" cy="259.6" r="3.75"/><circle cx="846.2" cy="260.0" r="3.75"/><circle cx="849.7" cy="260.5" r="3.75"/><circle cx="853.0" cy="260.3" r="3.75"/><circle cx="857.1" cy="260.0" r="3.75"/><circle cx="862.4" cy="259.3" r="3.75"/><circle cx="867.1" cy="259.8" r="3.75"/><circle cx="871.1" cy="260.6" r="3.75"/><circle cx="874.4" cy="258.8" r="3.75"/><circle cx="874.3" cy="257.3" r="3.75"/><circle cx="875.4" cy="261.2" r="3.75"/><circle cx="874.4" cy="267.3" r="3.75"/><circle cx="873.9" cy="270.3" r="3.75"/><circle cx="874.4" cy="274.3" r="3.75"/><circle cx="874.8" cy="278.2" r="3.75"/><circle cx="873.9" cy="283.9" r="3.75"/><circle cx="874.9" cy="288.4" r="3.75"/><circle cx="875.1" cy="291.8" r="3.75"/><circle cx="874.7" cy="294.9" r="3.75"/><circle cx="874.0" cy="301.0" r="3.75"/><circle cx="873.8" cy="304.9" r="3.75"/><circle cx="875.4" cy="308.0" r="3.75"/><circle cx="875.1" cy="312.7" r="3.75"/><circle cx="874.9" cy="316.3" r="3.75"/><circle cx="874.7" cy="321.6" r="3.75"/><circle cx="874.0" cy="325.0" r="3.75"/><circle cx="874.8" cy="330.9" r="3.75"/><circle cx="875.6" cy="332.9" r="3.75"/><circle cx="875.6" cy="339.1" r="3.75"/><circle cx="874.6" cy="343.0" r="3.75"/><circle cx="874.1" cy="346.2" r="3.75"/><circle cx="875.4" cy="349.7" r="3.75"/><circle cx="875.7" cy="355.0" r="3.75"/><circle cx="875.2" cy="360.2" r="3.75"/><circle cx="875.6" cy="362.7" r="3.75"/><circle cx="874.8" cy="368.1" r="3.75"/><circle cx="874.4" cy="372.4" r="3.75"/><circle cx="873.8" cy="377.1" r="3.75"/><circle cx="875.3" cy="381.0" r="3.75"/><circle cx="875.3" cy="384.7" r="3.75"/><circle cx="874.8" cy="387.7" r="3.75"/><circle cx="875.3" cy="393.8" r="3.75"/><circle cx="875.0" cy="396.9" r="3.75"/><circle cx="874.7" cy="402.2" r="3.75"/><circle cx="874.2" cy="406.2" r="3.75"/><circle cx="874.1" cy="409.9" r="3.75"/><circle cx="875.5" cy="415.4" r="3.75"/><circle cx="874.3" cy="419.7" r="3.75"/><circle cx="874.8" cy="421.9" r="3.75"/><circle cx="873.9" cy="427.4" r="3.75"/><circle cx="874.6" cy="431.0" r="3.75"/><circle cx="874.1" cy="436.5" r="3.75"/><circle cx="874.8" cy="440.9" r="3.75"/><circle cx="875.3" cy="444.4" r="3.75"/><circle cx="874.1" cy="448.8" r="3.75"/><circle cx="874.3" cy="452.8" r="3.75"/><circle cx="873.9" cy="456.0" r="3.75"/><circle cx="873.7" cy="462.2" r="3.75"/><circle cx="874.1" cy="465.3" r="3.75"/><circle cx="873.9" cy="468.9" r="3.75"/><circle cx="875.0" cy="474.5" r="3.75"/><circle cx="874.8" cy="476.8" r="3.75"/><circle cx="874.2" cy="482.2" r="3.75"/><circle cx="875.6" cy="486.3" r="3.75"/><circle cx="875.6" cy="491.3" r="3.75"/><circle cx="875.4" cy="495.6" r="3.75"/><circle cx="874.1" cy="498.6" r="3.75"/><circle cx="875.4" cy="502.3" r="3.75"/><circle cx="874.3" cy="507.5" r="3.75"/><circle cx="874.3" cy="512.6" r="3.75"/><circle cx="874.7" cy="517.1" r="3.75"/><circle cx="875.5" cy="521.3" r="3.75"/><circle cx="874.6" cy="523.7" r="3.75"/><circle cx="874.2" cy="528.1" r="3.75"/><circle cx="874.7" cy="533.2" r="3.75"/><circle cx="874.6" cy="538.0" r="3.75"/><circle cx="874.9" cy="540.9" r="3.75"/><circle cx="873.9" cy="546.5" r="3.75"/><circle cx="874.0" cy="549.1" r="3.75"/><circle cx="874.7" cy="555.2" r="3.75"/><circle cx="875.3" cy="558.5" r="3.75"/><circle cx="874.7" cy="562.6" r="3.75"/><circle cx="875.6" cy="567.0" r="3.75"/><circle cx="874.7" cy="572.2" r="3.75"/><circle cx="874.1" cy="575.0" r="3.75"/><circle cx="874.7" cy="579.6" r="3.75"/><circle cx="875.6" cy="584.2" r="3.75"/><circle cx="874.9" cy="588.0" r="3.75"/><circle cx="873.9" cy="593.3" r="3.75"/><circle cx="874.8" cy="595.8" r="3.75"/><circle cx="874.8" cy="599.7" r="3.75"/><circle cx="873.9" cy="605.6" r="3.75"/><circle cx="875.1" cy="609.0" r="3.75"/><circle cx="874.5" cy="612.5" r="3.75"/><circle cx="875.4" cy="618.6" r="3.75"/><circle cx="876.0" cy="618.2" r="3.75"/><circle cx="873.3" cy="617.7" r="3.75"/><circle cx="867.8" cy="617.6" r="3.75"/><circle cx="864.4" cy="617.0" r="3.75"/><circle cx="860.8" cy="616.7" r="3.75"/><circle cx="856.5" cy="617.2" r="3.75"/><circle cx="851.9" cy="617.8" r="3.75"/><circle cx="846.9" cy="617.3" r="3.75"/><circle cx="843.1" cy="617.4" r="3.75"/><circle cx="838.4" cy="617.9" r="3.75"/><circle cx="835.0" cy="616.9" r="3.75"/><circle cx="829.7" cy="617.1" r="3.75"/><circle cx="824.9" cy="617.0" r="3.75"/><circle cx="820.6" cy="617.7" r="3.75"/><circle cx="816.7" cy="616.6" r="3.75"/><circle cx="812.0" cy="617.6" r="3.75"/><circle cx="809.3" cy="616.4" r="3.75"/><circle cx="805.3" cy="616.2" r="3.75"/><circle cx="799.3" cy="617.9" r="3.75"/><circle cx="796.7" cy="616.7" r="3.75"/><circle cx="792.4" cy="618.0" r="3.75"/><circle cx="786.7" cy="617.4" r="3.75"/><circle cx="782.6" cy="617.9" r="3.75"/><circle cx="779.3" cy="616.8" r="3.75"/><circle cx="776.1" cy="617.8" r="3.75"/><circle cx="770.1" cy="616.4" r="3.75"/><circle cx="765.2" cy="618.0" r="3.75"/><circle cx="762.1" cy="616.7" r="3.75"/><circle cx="757.9" cy="616.8" r="3.75"/><circle cx="754.4" cy="618.1" r="3.75"/><circle cx="750.4" cy="618.1" r="3.75"/><circle cx="745.0" cy="617.2" r="3.75"/><circle cx="740.7" cy="617.9" r="3.75"/><circle cx="737.4" cy="617.8" r="3.75"/><circle cx="731.5" cy="616.2" r="3.75"/><circle cx="727.1" cy="618.0" r="3.75"/><circle cx="725.0" cy="616.3" r="3.75"/><circle cx="719.7" cy="616.7" r="3.75"/><circle cx="715.8" cy="617.3" r="3.75"/><circle cx="711.1" cy="617.3" r="3.75"/><circle cx="706.7" cy="618.2" r="3.75"/><circle cx="702.2" cy="616.5" r="3.75"/><circle cx="699.2" cy="617.3" r="3.75"/><circle cx="693.6" cy="617.4" r="3.75"/><circle cx="690.7" cy="617.9" r="3.75"/><circle cx="685.7" cy="618.2" r="3.75"/><circle cx="680.4" cy="616.6" r="3.75"/><circle cx="676.7" cy="616.5" r="3.75"/><circle cx="672.6" cy="617.4" r="3.75"/><circle cx="668.5" cy="617.2" r="3.75"/><circle cx="663.2" cy="616.6" r="3.75"/><circle cx="660.8" cy="616.4" r="3.75"/><circle cx="655.4" cy="616.6" r="3.75"/><circle cx="650.9" cy="617.4" r="3.75"/><circle cx="646.5" cy="616.4" r="3.75"/><circle cx="642.7" cy="616.7" r="3.75"/><circle cx="638.3" cy="617.4" r="3.75"/><circle cx="634.2" cy="618.1" r="3.75"/><circle cx="630.9" cy="617.3" r="3.75"/><circle cx="627.5" cy="617.5" r="3.75"/><circle cx="621.7" cy="617.0" r="3.75"/><circle cx="618.4" cy="616.3" r="3.75"/><circle cx="613.1" cy="617.5" r="3.75"/><circle cx="608.9" cy="617.1" r="3.75"/><circle cx="604.9" cy="617.4" r="3.75"/><circle cx="599.5" cy="616.9" r="3.75"/><circle cx="596.0" cy="616.7" r="3.75"/><circle cx="591.1" cy="618.2" r="3.75"/><circle cx="587.8" cy="616.7" r="3.75"/><circle cx="584.4" cy="617.4" r="3.75"/><circle cx="580.7" cy="617.8" r="3.75"/><circle cx="575.6" cy="618.0" r="3.75"/><circle cx="571.7" cy="616.4" r="3.75"/><circle cx="566.7" cy="617.2" r="3.75"/><circle cx="561.4" cy="617.1" r="3.75"/><circle cx="557.1" cy="616.9" r="3.75"/><circle cx="553.3" cy="618.0" r="3.75"/><circle cx="549.6" cy="616.7" r="3.75"/><circle cx="546.8" cy="616.3" r="3.75"/><circle cx="542.2" cy="617.3" r="3.75"/><circle cx="538.0" cy="617.2" r="3.75"/><circle cx="532.6" cy="618.1" r="3.75"/><circle cx="527.5" cy="617.4" r="3.75"/><circle cx="524.3" cy="617.0" r="3.75"/><circle cx="523.7" cy="618.5" r="3.75"/><circle cx="522.3" cy="613.6" r="3.75"/><circle cx="521.3" cy="610.4" r="3.75"/><circle cx="518.4" cy="606.9" r="3.75"/><circle cx="517.3" cy="603.7" r="3.75"/><circle cx="518.7" cy="598.7" r="3.75"/><circle cx="519.0" cy="592.7" r="3.75"/><circle cx="517.0" cy="586.3" r="3.75"/><circle cx="518.0" cy="581.0" r="3.75"/><circle cx="517.6" cy="579.0" r="3.75"/><circle cx="515.9" cy="573.8" r="3.75"/><circle cx="514.6" cy="568.1" r="3.75"/><circle cx="515.5" cy="564.7" r="3.75"/><circle cx="513.6" cy="559.7" r="3.75"/><circle cx="513.0" cy="554.6" r="3.75"/><circle cx="510.9" cy="551.7" r="3.75"/><circle cx="510.4" cy="547.3" r="3.75"/><circle cx="508.9" cy="544.3" r="3.75"/><circle cx="508.1" cy="539.7" r="3.75"/><circle cx="508.9" cy="535.6" r="3.75"/><circle cx="507.8" cy="531.4" r="3.75"/><circle cx="507.9" cy="526.8" r="3.75"/><circle cx="507.8" cy="522.1" r="3.75"/><circle cx="506.3" cy="515.2" r="3.75"/><circle cx="502.8" cy="512.5" r="3.75"/><circle cx="502.3" cy="509.1" r="3.75"/><circle cx="498.1" cy="503.5" r="3.75"/><circle cx="495.6" cy="500.8" r="3.75"/><circle cx="494.4" cy="496.9" r="3.75"/><circle cx="494.2" cy="492.5" r="3.75"/><circle cx="493.0" cy="487.5" r="3.75"/><circle cx="494.3" cy="484.2" r="3.75"/><circle cx="493.3" cy="477.4" r="3.75"/><circle cx="491.3" cy="475.5" r="3.75"/><circle cx="491.1" cy="470.1" r="3.75"/><circle cx="489.5" cy="464.6" r="3.75"/><circle cx="488.6" cy="460.2" r="3.75"/><circle cx="489.2" cy="456.7" r="3.75"/><circle cx="488.1" cy="450.8" r="3.75"/><circle cx="487.0" cy="446.7" r="3.75"/><circle cx="484.1" cy="440.7" r="3.75"/><circle cx="480.8" cy="437.0" r="3.75"/><circle cx="478.7" cy="434.6" r="3.75"/><circle cx="477.9" cy="427.8" r="3.75"/><circle cx="476.0" cy="423.5" r="3.75"/><circle cx="475.1" cy="419.9" r="3.75"/><circle cx="473.3" cy="413.9" r="3.75"/><circle cx="472.7" cy="409.5" r="3.75"/><circle cx="470.4" cy="406.4" r="3.75"/><circle cx="468.7" cy="400.7" r="3.75"/><circle cx="466.1" cy="397.7" r="3.75"/><circle cx="465.7" cy="394.4" r="3.75"/><circle cx="463.0" cy="390.5" r="3.75"/><circle cx="462.2" cy="384.7" r="3.75"/><circle cx="460.6" cy="380.2" r="3.75"/><circle cx="458.9" cy="375.8" r="3.75"/><circle cx="458.8" cy="371.8" r="3.75"/><circle cx="456.2" cy="368.5" r="3.75"/><circle cx="453.8" cy="362.6" r="3.75"/><circle cx="451.2" cy="360.2" r="3.75"/><circle cx="450.0" cy="355.5" r="3.75"/><circle cx="446.7" cy="352.1" r="3.75"/><circle cx="446.4" cy="348.8" r="3.75"/><circle cx="447.8" cy="343.9" r="3.75"/><circle cx="447.3" cy="339.4" r="3.75"/><circle cx="447.6" cy="335.3" r="3.75"/><circle cx="448.1" cy="332.2" r="3.75"/><circle cx="449.8" cy="326.3" r="3.75"/><circle cx="449.1" cy="323.6" r="3.75"/><circle cx="449.7" cy="318.9" r="3.75"/><circle cx="450.3" cy="314.5" r="3.75"/><circle cx="451.1" cy="310.7" r="3.75"/><circle cx="451.8" cy="304.7" r="3.75"/><circle cx="452.0" cy="299.4" r="3.75"/><circle cx="452.2" cy="296.5" r="3.75"/><circle cx="450.8" cy="289.8" r="3.75"/><circle cx="451.1" cy="287.5" r="3.75"/><circle cx="450.8" cy="281.2" r="3.75"/><circle cx="450.4" cy="275.7" r="3.75"/><circle cx="448.9" cy="271.8" r="3.75"/><circle cx="450.0" cy="267.9" r="3.75"/><circle cx="448.3" cy="264.9" r="3.75"/><circle cx="449.3" cy="258.6" r="3.75"/></g><circle cx="436" cy="255" r="2.6" fill="#fff" stroke="#555" stroke-width="1"/><circle cx="741.4" cy="241.5" r="2.6" fill="#fff" stroke="#555" stroke-width="1"/><circle cx="777.5" cy="239.5" r="2.6" fill="#fff" stroke="#555" stroke-width="1"/><circle cx="824" cy="194" r="2.6" fill="#fff" stroke="#555" stroke-width="1"/><circle cx="373.4" cy="442.5" r="2.6" fill="#fff" stroke="#555" stroke-width="1"/><circle cx="288.6" cy="576" r="2.6" fill="#fff" stroke="#555" stroke-width="1"/><circle cx="437.5" cy="590.3" r="2.6" fill="#fff" stroke="#555" stroke-width="1"/><circle cx="284.3" cy="617.6" r="2.6" fill="#fff" stroke="#555" stroke-width="1"/><circle cx="605" cy="714.3" r="2.6" fill="#fff" stroke="#555" stroke-width="1"/><g fill="#dc3439" stroke="#661515" stroke-width="1"><circle cx="456" cy="261" r="3.8"/><circle cx="453" cy="267" r="3.8"/><circle cx="464" cy="274" r="3.8"/><circle cx="488" cy="273" r="3.8"/><circle cx="486" cy="277" r="3.8"/><circle cx="504" cy="279" r="3.8"/><circle cx="525" cy="272" r="3.8"/><circle cx="563" cy="269" r="3.8"/><circle cx="584" cy="271" r="3.8"/><circle cx="474" cy="297" r="3.8"/><circle cx="480" cy="298" r="3.8"/><circle cx="492" cy="299" r="3.8"/><circle cx="509" cy="294" r="3.8"/><circle cx="505" cy="299" r="3.8"/><circle cx="516" cy="299" r="3.8"/><circle cx="539" cy="299" r="3.8"/><circle cx="579" cy="300" r="3.8"/><circle cx="578" cy="307" r="3.8"/><circle cx="583" cy="309" r="3.8"/><circle cx="583" cy="316" r="3.8"/><circle cx="482" cy="307" r="3.8"/><circle cx="489" cy="313" r="3.8"/><circle cx="457" cy="322" r="3.8"/><circle cx="496" cy="322" r="3.8"/><circle cx="509" cy="332" r="3.8"/><circle cx="452" cy="344" r="3.8"/><circle cx="487" cy="348" r="3.8"/><circle cx="510" cy="346" r="3.8"/><circle cx="544" cy="353" r="3.8"/><circle cx="571" cy="354" r="3.8"/><circle cx="579" cy="354" r="3.8"/><circle cx="575" cy="366" r="3.8"/><circle cx="572" cy="368" r="3.8"/><circle cx="609" cy="272" r="3.8"/><circle cx="622" cy="308" r="3.8"/><circle cx="651" cy="312" r="3.8"/><circle cx="663" cy="314" r="3.8"/><circle cx="720" cy="309" r="3.8"/><circle cx="622" cy="334" r="3.8"/><circle cx="631" cy="345" r="3.8"/><circle cx="625" cy="354" r="3.8"/><circle cx="644" cy="356" r="3.8"/><circle cx="652" cy="358" r="3.8"/><circle cx="663" cy="357" r="3.8"/><circle cx="709" cy="356" r="3.8"/><circle cx="693" cy="365" r="3.8"/><circle cx="699" cy="364" r="3.8"/><circle cx="733" cy="363" r="3.8"/><circle cx="743" cy="265" r="3.8"/><circle cx="755" cy="268" r="3.8"/><circle cx="776" cy="287" r="3.8"/><circle cx="792" cy="287" r="3.8"/><circle cx="839" cy="284" r="3.8"/><circle cx="743" cy="295" r="3.8"/><circle cx="751" cy="301" r="3.8"/><circle cx="755" cy="304" r="3.8"/><circle cx="740" cy="304" r="3.8"/><circle cx="743" cy="307" r="3.8"/><circle cx="753" cy="307" r="3.8"/><circle cx="781" cy="308" r="3.8"/><circle cx="804" cy="315" r="3.8"/><circle cx="760" cy="321" r="3.8"/><circle cx="770" cy="325" r="3.8"/><circle cx="737" cy="329" r="3.8"/><circle cx="793" cy="336" r="3.8"/><circle cx="858" cy="342" r="3.8"/><circle cx="741" cy="352" r="3.8"/><circle cx="757" cy="352" r="3.8"/><circle cx="815" cy="358" r="3.8"/><circle cx="823" cy="357" r="3.8"/><circle cx="825" cy="366" r="3.8"/><circle cx="830" cy="366" r="3.8"/><circle cx="835" cy="363" r="3.8"/><circle cx="867" cy="367" r="3.8"/><circle cx="873" cy="363" r="3.8"/><circle cx="459" cy="382" r="3.8"/><circle cx="465" cy="378" r="3.8"/><circle cx="469" cy="381" r="3.8"/><circle cx="464" cy="386" r="3.8"/><circle cx="469" cy="388" r="3.8"/><circle cx="471" cy="391" r="3.8"/><circle cx="466" cy="392" r="3.8"/><circle cx="469" cy="397" r="3.8"/><circle cx="499" cy="387" r="3.8"/><circle cx="554" cy="384" r="3.8"/><circle cx="565" cy="385" r="3.8"/><circle cx="574" cy="386" r="3.8"/><circle cx="579" cy="381" r="3.8"/><circle cx="579" cy="389" r="3.8"/><circle cx="550" cy="403" r="3.8"/><circle cx="586" cy="408" r="3.8"/><circle cx="481" cy="418" r="3.8"/><circle cx="482" cy="427" r="3.8"/><circle cx="484" cy="433" r="3.8"/><circle cx="526" cy="425" r="3.8"/><circle cx="489" cy="442" r="3.8"/><circle cx="493" cy="442" r="3.8"/><circle cx="543" cy="439" r="3.8"/><circle cx="557" cy="442" r="3.8"/><circle cx="561" cy="438" r="3.8"/><circle cx="560" cy="444" r="3.8"/><circle cx="569" cy="442" r="3.8"/><circle cx="523" cy="449" r="3.8"/><circle cx="497" cy="474" r="3.8"/><circle cx="563" cy="488" r="3.8"/><circle cx="586" cy="490" r="3.8"/><circle cx="502" cy="492" r="3.8"/><circle cx="635" cy="380" r="3.8"/><circle cx="663" cy="382" r="3.8"/><circle cx="668" cy="380" r="3.8"/><circle cx="671" cy="384" r="3.8"/><circle cx="665" cy="387" r="3.8"/><circle cx="684" cy="384" r="3.8"/><circle cx="689" cy="391" r="3.8"/><circle cx="698" cy="386" r="3.8"/><circle cx="702" cy="386" r="3.8"/><circle cx="723" cy="380" r="3.8"/><circle cx="720" cy="388" r="3.8"/><circle cx="723" cy="405" r="3.8"/><circle cx="723" cy="408" r="3.8"/><circle cx="674" cy="418" r="3.8"/><circle cx="648" cy="427" r="3.8"/><circle cx="604" cy="437" r="3.8"/><circle cx="607" cy="436" r="3.8"/><circle cx="724" cy="426" r="3.8"/><circle cx="694" cy="439" r="3.8"/><circle cx="699" cy="435" r="3.8"/><circle cx="695" cy="443" r="3.8"/><circle cx="715" cy="439" r="3.8"/><circle cx="722" cy="440" r="3.8"/><circle cx="713" cy="443" r="3.8"/><circle cx="719" cy="446" r="3.8"/><circle cx="724" cy="445" r="3.8"/><circle cx="713" cy="451" r="3.8"/><circle cx="723" cy="452" r="3.8"/><circle cx="677" cy="466" r="3.8"/><circle cx="683" cy="464" r="3.8"/><circle cx="681" cy="468" r="3.8"/><circle cx="659" cy="473" r="3.8"/><circle cx="638" cy="485" r="3.8"/><circle cx="651" cy="484" r="3.8"/><circle cx="681" cy="486" r="3.8"/><circle cx="687" cy="484" r="3.8"/><circle cx="746" cy="382" r="3.8"/><circle cx="750" cy="378" r="3.8"/><circle cx="751" cy="385" r="3.8"/><circle cx="747" cy="404" r="3.8"/><circle cx="825" cy="380" r="3.8"/><circle cx="831" cy="376" r="3.8"/><circle cx="834" cy="379" r="3.8"/><circle cx="824" cy="387" r="3.8"/><circle cx="829" cy="386" r="3.8"/><circle cx="835" cy="385" r="3.8"/><circle cx="834" cy="392" r="3.8"/><circle cx="833" cy="397" r="3.8"/><circle cx="843" cy="390" r="3.8"/><circle cx="840" cy="394" r="3.8"/><circle cx="851" cy="385" r="3.8"/><circle cx="846" cy="404" r="3.8"/><circle cx="869" cy="391" r="3.8"/><circle cx="874" cy="386" r="3.8"/><circle cx="874" cy="382" r="3.8"/><circle cx="874" cy="414" r="3.8"/><circle cx="824" cy="418" r="3.8"/><circle cx="865" cy="425" r="3.8"/><circle cx="748" cy="445" r="3.8"/><circle cx="776" cy="445" r="3.8"/><circle cx="782" cy="441" r="3.8"/><circle cx="782" cy="452" r="3.8"/><circle cx="795" cy="445" r="3.8"/><circle cx="803" cy="449" r="3.8"/><circle cx="808" cy="451" r="3.8"/><circle cx="813" cy="448" r="3.8"/><circle cx="824" cy="450" r="3.8"/><circle cx="830" cy="455" r="3.8"/><circle cx="840" cy="459" r="3.8"/><circle cx="856" cy="445" r="3.8"/><circle cx="860" cy="469" r="3.8"/><circle cx="874" cy="474" r="3.8"/><circle cx="826" cy="474" r="3.8"/><circle cx="823" cy="479" r="3.8"/><circle cx="820" cy="483" r="3.8"/><circle cx="799" cy="477" r="3.8"/><circle cx="800" cy="482" r="3.8"/><circle cx="805" cy="483" r="3.8"/><circle cx="789" cy="483" r="3.8"/><circle cx="771" cy="483" r="3.8"/><circle cx="767" cy="490" r="3.8"/><circle cx="753" cy="482" r="3.8"/><circle cx="758" cy="483" r="3.8"/><circle cx="843" cy="483" r="3.8"/><circle cx="864" cy="487" r="3.8"/><circle cx="869" cy="484" r="3.8"/><circle cx="500" cy="501" r="3.8"/><circle cx="508" cy="499" r="3.8"/><circle cx="513" cy="497" r="3.8"/><circle cx="515" cy="508" r="3.8"/><circle cx="547" cy="507" r="3.8"/><circle cx="570" cy="507" r="3.8"/><circle cx="586" cy="498" r="3.8"/><circle cx="532" cy="521" r="3.8"/><circle cx="589" cy="520" r="3.8"/><circle cx="509" cy="532" r="3.8"/><circle cx="517" cy="529" r="3.8"/><circle cx="519" cy="533" r="3.8"/><circle cx="526" cy="534" r="3.8"/><circle cx="510" cy="539" r="3.8"/><circle cx="514" cy="541" r="3.8"/><circle cx="523" cy="539" r="3.8"/><circle cx="518" cy="542" r="3.8"/><circle cx="521" cy="547" r="3.8"/><circle cx="517" cy="550" r="3.8"/><circle cx="525" cy="556" r="3.8"/><circle cx="523" cy="564" r="3.8"/><circle cx="527" cy="564" r="3.8"/><circle cx="534" cy="564" r="3.8"/><circle cx="540" cy="564" r="3.8"/><circle cx="540" cy="567" r="3.8"/><circle cx="568" cy="564" r="3.8"/><circle cx="572" cy="565" r="3.8"/><circle cx="525" cy="589" r="3.8"/><circle cx="534" cy="598" r="3.8"/><circle cx="560" cy="597" r="3.8"/><circle cx="588" cy="599" r="3.8"/><circle cx="522" cy="605" r="3.8"/><circle cx="685" cy="501" r="3.8"/><circle cx="690" cy="500" r="3.8"/><circle cx="724" cy="518" r="3.8"/><circle cx="725" cy="524" r="3.8"/><circle cx="597" cy="507" r="3.8"/><circle cx="623" cy="508" r="3.8"/><circle cx="636" cy="508" r="3.8"/><circle cx="654" cy="508" r="3.8"/><circle cx="662" cy="508" r="3.8"/><circle cx="643" cy="518" r="3.8"/><circle cx="637" cy="531" r="3.8"/><circle cx="683" cy="527" r="3.8"/><circle cx="704" cy="524" r="3.8"/><circle cx="703" cy="532" r="3.8"/><circle cx="710" cy="531" r="3.8"/><circle cx="722" cy="540" r="3.8"/><circle cx="735" cy="545" r="3.8"/><circle cx="654" cy="543" r="3.8"/><circle cx="650" cy="560" r="3.8"/><circle cx="664" cy="562" r="3.8"/><circle cx="643" cy="570" r="3.8"/><circle cx="703" cy="564" r="3.8"/><circle cx="706" cy="563" r="3.8"/><circle cx="702" cy="581" r="3.8"/><circle cx="699" cy="589" r="3.8"/><circle cx="730" cy="609" r="3.8"/><circle cx="752" cy="507" r="3.8"/><circle cx="747" cy="516" r="3.8"/><circle cx="782" cy="518" r="3.8"/><circle cx="806" cy="503" r="3.8"/><circle cx="817" cy="499" r="3.8"/><circle cx="806" cy="519" r="3.8"/><circle cx="858" cy="512" r="3.8"/><circle cx="765" cy="528" r="3.8"/><circle cx="769" cy="532" r="3.8"/><circle cx="774" cy="535" r="3.8"/><circle cx="778" cy="541" r="3.8"/><circle cx="805" cy="533" r="3.8"/><circle cx="809" cy="532" r="3.8"/><circle cx="807" cy="536" r="3.8"/><circle cx="826" cy="542" r="3.8"/><circle cx="809" cy="549" r="3.8"/><circle cx="753" cy="557" r="3.8"/><circle cx="747" cy="565" r="3.8"/><circle cx="757" cy="570" r="3.8"/><circle cx="820" cy="557" r="3.8"/><circle cx="823" cy="559" r="3.8"/><circle cx="828" cy="565" r="3.8"/><circle cx="827" cy="568" r="3.8"/><circle cx="846" cy="568" r="3.8"/><circle cx="869" cy="566" r="3.8"/><circle cx="808" cy="562" r="3.8"/><circle cx="788" cy="593" r="3.8"/><circle cx="787" cy="600" r="3.8"/><circle cx="804" cy="604" r="3.8"/><circle cx="822" cy="593" r="3.8"/><circle cx="829" cy="596" r="3.8"/><circle cx="831" cy="612" r="3.8"/><circle cx="761" cy="611" r="3.8"/><circle cx="869" cy="599" r="3.8"/><circle cx="443" cy="659" r="3.8"/><circle cx="720" cy="460" r="3.8"/><circle cx="691" cy="466" r="3.8"/><circle cx="698" cy="474" r="3.8"/><circle cx="711" cy="470" r="3.8"/><circle cx="706" cy="471" r="3.8"/><circle cx="714" cy="473" r="3.8"/><circle cx="719" cy="472" r="3.8"/><circle cx="724" cy="475" r="3.8"/><circle cx="729" cy="472" r="3.8"/><circle cx="704" cy="480" r="3.8"/><circle cx="712" cy="478" r="3.8"/><circle cx="717" cy="479" r="3.8"/><circle cx="727" cy="482" r="3.8"/><circle cx="736" cy="480" r="3.8"/><circle cx="703" cy="486" r="3.8"/><circle cx="709" cy="485" r="3.8"/><circle cx="718" cy="485" r="3.8"/><circle cx="723" cy="484" r="3.8"/><circle cx="733" cy="485" r="3.8"/><circle cx="693" cy="493" r="3.8"/><circle cx="697" cy="495" r="3.8"/><circle cx="706" cy="492" r="3.8"/><circle cx="714" cy="490" r="3.8"/><circle cx="720" cy="490" r="3.8"/><circle cx="725" cy="492" r="3.8"/><circle cx="732" cy="490" r="3.8"/><circle cx="736" cy="487" r="3.8"/><circle cx="706" cy="498" r="3.8"/><circle cx="714" cy="495" r="3.8"/><circle cx="721" cy="496" r="3.8"/><circle cx="726" cy="497" r="3.8"/><circle cx="702" cy="500" r="3.8"/><circle cx="716" cy="501" r="3.8"/><circle cx="723" cy="502" r="3.8"/><circle cx="728" cy="505" r="3.8"/><circle cx="730" cy="507" r="3.8"/><circle cx="711" cy="504" r="3.8"/><circle cx="717" cy="505" r="3.8"/><circle cx="720" cy="510" r="3.8"/><circle cx="704" cy="509" r="3.8"/><circle cx="748" cy="468" r="3.8"/><circle cx="748" cy="485" r="3.8"/><circle cx="743" cy="495" r="3.8"/><circle cx="691" cy="501" r="3.8"/></g></svg><div class="abs" style="left:95px;top:137px;font-size:12px;line-height:14px;color:#2a2a2a;letter-spacing:0.1px;white-space:nowrap;text-shadow:0 0 2px #fff,0 0 2px #fff;">Sioux Falls</div><div class="abs" style="left:422px;top:125px;font-size:12px;line-height:14px;color:#2a2a2a;letter-spacing:0.0px;white-space:nowrap;text-shadow:0 0 2px #fff,0 0 2px #fff;">Albert Lea</div><div class="abs" style="left:500px;top:122px;font-size:12px;line-height:14px;color:#2a2a2a;letter-spacing:0.0px;white-space:nowrap;text-shadow:0 0 2px #fff,0 0 2px #fff;">Austin</div><div class="abs" style="left:531px;top:77px;font-size:12px;line-height:14px;color:#2a2a2a;letter-spacing:0.0px;white-space:nowrap;text-shadow:0 0 2px #fff,0 0 2px #fff;">Rochester</div><div class="abs" style="left:93px;top:324px;font-size:12px;line-height:14px;color:#2a2a2a;letter-spacing:0.0px;white-space:nowrap;text-shadow:0 0 2px #fff,0 0 2px #fff;">Norfolk</div><div class="abs" style="left:184px;top:432px;font-size:12px;line-height:14px;color:#2a2a2a;letter-spacing:0.0px;white-space:nowrap;text-shadow:0 0 2px #fff,0 0 2px #fff;">Omaha</div><div class="abs" style="left:16px;top:469px;font-size:12px;line-height:14px;color:#2a2a2a;letter-spacing:-0.2px;white-space:nowrap;text-shadow:0 0 2px #fff,0 0 2px #fff;">Grand Island</div><div class="abs" style="left:157.5px;top:472px;font-size:12px;line-height:14px;color:#2a2a2a;letter-spacing:0.1px;white-space:nowrap;text-shadow:0 0 2px #fff,0 0 2px #fff;">Lincoln</div><div class="abs" style="left:6px;top:500px;font-size:12px;line-height:14px;color:#2a2a2a;letter-spacing:-0.2px;white-space:nowrap;text-shadow:0 0 2px #fff,0 0 2px #fff;">Hastings</div><div class="abs" style="left:330px;top:615px;font-size:12px;line-height:14px;color:#2a2a2a;letter-spacing:-0.3px;white-space:nowrap;text-shadow:0 0 2px #fff,0 0 2px #fff;">St Joseph</div><div class="abs" style="left:170px;top:666px;font-size:12px;line-height:14px;color:#2a2a2a;letter-spacing:-0.2px;white-space:nowrap;text-shadow:0 0 2px #fff,0 0 2px #fff;">Manhattan</div><div class="abs" style="left:356px;top:679px;font-size:12px;line-height:14px;color:#2a2a2a;letter-spacing:0.2px;white-space:nowrap;text-shadow:0 0 2px #fff,0 0 2px #fff;">Kansas City</div><div class="abs" style="left:146px;top:323px;width:55px;height:23px;background:#f1f1ee"></div><div class="abs" style="left:157px;top:323px;font-size:10px;line-height:12px;color:#555;letter-spacing:0.0px;white-space:nowrap;text-shadow:0 0 2px #fff,0 0 2px #fff;">Omaha</div><div class="abs" style="left:147px;top:333px;font-size:10px;line-height:12px;color:#555;letter-spacing:-0.1px;white-space:nowrap;text-shadow:0 0 2px #fff,0 0 2px #fff;">Reservation</div><div class="abs" style="left:140px;top:397px;font-size:11.5px;line-height:13.5px;color:#6a9bbd;letter-spacing:0.2px;white-space:nowrap;font-style:italic;text-shadow:0 0 2px #fff,0 0 2px #fff;">Platte</div><div class="abs" style="left:0px;top:564px;font-size:10.5px;line-height:12.5px;color:#6a9bbd;letter-spacing:1.0px;white-space:nowrap;font-style:italic;text-shadow:0 0 2px #fff,0 0 2px #fff;">can</div><div class="abs" style="left:1px;top:194px;font-size:11px;line-height:13px;color:#555;letter-spacing:1.0px;white-space:nowrap;text-shadow:0 0 2px #fff,0 0 2px #fff;">kto</div><div class="abs" style="left:0px;top:204px;font-size:11px;line-height:13px;color:#555;letter-spacing:1.2px;white-space:nowrap;text-shadow:0 0 2px #fff,0 0 2px #fff;">rva</div><div class="abs" style="left:75px;top:-2px;font-size:10px;line-height:12px;color:#666;letter-spacing:1.0px;white-space:nowrap;font-style:italic;text-shadow:0 0 2px #fff,0 0 2px #fff;">P L A T E A U &nbsp;&nbsp;D U</div><div class="abs" style="left:75px;top:9px;font-size:10px;line-height:12px;color:#666;letter-spacing:1.0px;white-space:nowrap;font-style:italic;text-shadow:0 0 2px #fff,0 0 2px #fff;">C O T E A U &nbsp;&nbsp;D E S</div><div class="abs" style="left:320px;top:665px;width:276px;height:19px;background:rgba(255,255,255,0.55)"></div><div class="abs" style="left:323px;top:667px;font-size:12.4px;line-height:15px;color:#333;white-space:nowrap">Esri, HERE, Garmin, FAO, NOAA, USGS, EP...</div><svg class="abs" style="left:582px;top:667px" width="14" height="15" viewBox="0 0 14 15"><path d="M2 2 L9 2 L6.5 4.5 L12.5 10.5 L10.5 12.5 L4.5 6.5 L2 9 Z" fill="#fff" stroke="#555" stroke-width="1"/></svg>
</div>
<div class="abs" style="left:676px;top:111px;width:181px;height:39px;background:#f5f5f5;border:1px solid #ddd;border-radius:3px"></div>
<div class="abs" style="left:690px;top:121px;font-size:17.2px;line-height:20px;color:#444;white-space:nowrap">Switch Basemap</div>
<svg class="abs" style="left:824px;top:124px" width="17" height="14" viewBox="0 0 17 14"><path d="M2 3 L8.5 9.5 L15 3" fill="none" stroke="#777" stroke-width="3.4"/></svg>
<div class="abs" style="left:350px;top:115px;width:111px;height:34px;background:#337ab7;border-radius:4px 0 0 4px"></div>
<div class="abs" style="left:363px;top:125px;font-size:14.5px;line-height:17px;color:#fff;white-space:nowrap">Coordinate</div>
<svg class="abs" style="left:439px;top:129px" width="8" height="5" viewBox="0 0 8 5"><path d="M0 0 L8 0 L4 4.5 Z" fill="#fff"/></svg>
<div class="abs" style="left:460px;top:115px;width:201px;height:34px;background:#fff;border:1px solid #ccc;border-left:none"></div>
<div class="abs" style="left:473px;top:124px;font-size:14.5px;line-height:17px;color:#999;white-space:nowrap">Search</div>
<div class="abs" style="left:660px;top:115px;width:40px;height:34px;background:#337ab7;border-radius:0 4px 4px 0"></div>
<svg class="abs" style="left:671px;top:123px" width="18" height="18" viewBox="0 0 18 18"><circle cx="7.3" cy="7.3" r="4.6" fill="none" stroke="#fff" stroke-width="2.4"/><path d="M10.6 10.6 L14.5 14.5" stroke="#fff" stroke-width="2.8" stroke-linecap="round"/></svg>
<div class="abs" style="left:294px;top:115px;width:40px;height:331px;background:#fff;border:1px solid #ccc;border-radius:4px"></div>
<div class="abs" style="left:295px;top:152px;width:38px;height:37px;background:#e6e6e6"></div>
<div class="abs" style="left:295px;top:152px;width:38px;height:1px;background:#ccc"></div>
<div class="abs" style="left:295px;top:188px;width:38px;height:1px;background:#ccc"></div>
<div class="abs" style="left:295px;top:225px;width:38px;height:1px;background:#ccc"></div>
<div class="abs" style="left:295px;top:262px;width:38px;height:1px;background:#ccc"></div>
<div class="abs" style="left:295px;top:298px;width:38px;height:1px;background:#ccc"></div>
<div class="abs" style="left:295px;top:335px;width:38px;height:1px;background:#ccc"></div>
<div class="abs" style="left:295px;top:371px;width:38px;height:1px;background:#ccc"></div>
<div class="abs" style="left:295px;top:408px;width:38px;height:1px;background:#ccc"></div>
<svg class="abs" style="left:303px;top:122px" width="23" height="24" viewBox="0 0 23 24"><g fill="#333"><path d="M11.5 3.5 L15.5 7.8 L7.5 7.8 Z M11.5 20.5 L15.5 16.2 L7.5 16.2 Z M3 12 L7.3 8 L7.3 16 Z M20 12 L15.7 8 L15.7 16 Z"/><rect x="10.1" y="7" width="2.8" height="10"/><rect x="6.5" y="10.6" width="10" height="2.8"/></g></svg>
<svg class="abs" style="left:302px;top:158px" width="24" height="24" viewBox="0 0 24 24"><circle cx="12.3" cy="10.8" r="6" fill="none" stroke="#333" stroke-width="2.5"/><path d="M16.6 15.1 L21 19.5" stroke="#333" stroke-width="3.3" stroke-linecap="round"/><path d="M9.3 10.8 H15.3 M12.3 7.8 V13.8" stroke="#333" stroke-width="1.6"/></svg>
<svg class="abs" style="left:302px;top:195px" width="24" height="24" viewBox="0 0 24 24"><circle cx="12.3" cy="10.8" r="6" fill="none" stroke="#333" stroke-width="2.5"/><path d="M16.6 15.1 L21 19.5" stroke="#333" stroke-width="3.3" stroke-linecap="round"/><path d="M9.3 10.8 H15.3" stroke="#333" stroke-width="1.6"/></svg>
<svg class="abs" style="left:302px;top:231px" width="24" height="24" viewBox="0 0 24 24"><path d="M4.5 12 H19.5 M12 4.5 V19.5" stroke="#333" stroke-width="3.2"/></svg>
<svg class="abs" style="left:302px;top:268px" width="24" height="24" viewBox="0 0 24 24"><path d="M4.5 12 H19.5" stroke="#333" stroke-width="3.6"/></svg>
<svg class="abs" style="left:302px;top:304px" width="24" height="24" viewBox="0 0 24 24"><path d="M5.5 12 L11.5 6.5 L11.5 10 L20.5 10 L20.5 14 L11.5 14 L11.5 17.5 Z" fill="#333"/></svg>
<svg class="abs" style="left:302px;top:341px" width="24" height="24" viewBox="0 0 24 24"><path d="M20 12 L14 6.5 L14 10 L6 10 L6 14 L14 14 L14 17.5 Z" fill="#333"/></svg>
<svg class="abs" style="left:302px;top:378px" width="24" height="24" viewBox="0 0 24 24"><circle cx="13" cy="11.8" r="8.4" fill="#333"/><path d="M7.3 7.4 C7.8 6.2 8.2 5.5 8.8 5.3 L16 5.3 L16.7 8.5 L14.2 9.9 L13.5 13.5 L19.6 15 L17.4 18.2 L13.8 18.9 L12.4 16.4 L9.9 14.2 L8 10.7 Z" fill="#fff"/><circle cx="11.5" cy="8" r="0.9" fill="#333"/><circle cx="11" cy="13.5" r="0.9" fill="#333"/><circle cx="13" cy="11.8" r="8.4" fill="none" stroke="#333" stroke-width="1.4"/></svg>
<svg class="abs" style="left:302px;top:414px" width="24" height="24" viewBox="0 0 24 24"><path d="M11 5 H15 V12 H18.5 L13 17.5 L7.5 12 H11 Z" fill="#333"/><rect x="4" y="18.5" width="18" height="3.6" fill="#333"/></svg>

<div id="rpanel" class="abs"></div>
<div class="abs" style="left:878px;top:101px;width:278px;height:41px;background:#f5f5f5;border-bottom:1px solid #ddd"></div>
<div class="abs" style="left:886px;top:109px;width:25px;height:25px;background:#fff;border:1px solid #ccc;border-radius:4px"></div>
<svg class="abs" style="left:886px;top:109px" width="25" height="25" viewBox="0 0 25 25"><path d="M14.5 6.5 L9 12.5 L14.5 18.5" fill="none" stroke="#222" stroke-width="3.2"/></svg>
<div class="abs" style="left:918px;top:111.5px;font-size:17.5px;line-height:20px;color:#444;white-space:nowrap">Charts</div>
<div class="abs" style="left:982px;top:110px;width:25px;height:25px;background:#fff;border:1px solid #ccc;border-radius:4px"></div>
<svg class="abs" style="left:982px;top:110px" width="25" height="25" viewBox="0 0 25 25"><rect x="6" y="11" width="13" height="3" fill="#222"/><rect x="11" y="6" width="3" height="13" fill="#222"/></svg>
<svg class="abs" style="left:1128px;top:118px" width="12" height="12" viewBox="0 0 12 12"><path d="M1.5 1.5 L10.5 10.5 M10.5 1.5 L1.5 10.5" stroke="#b3b3b3" stroke-width="1.5"/></svg>
<div class="abs" style="left:1139px;top:142px;width:17px;height:643px;background:#e6e6e6"></div>
<div class="abs" style="left:1139px;top:158px;width:17px;height:588px;background:#bcbcbc"></div>
<svg class="abs" style="left:1139px;top:143px" width="17" height="14" viewBox="0 0 17 14"><path d="M4 9.5 L8.5 5 L13 9.5" fill="none" stroke="#888" stroke-width="1.3"/></svg>
<svg class="abs" style="left:1139px;top:767px" width="17" height="14" viewBox="0 0 17 14"><path d="M4 5 L8.5 9.5 L13 5" fill="none" stroke="#888" stroke-width="1.3"/></svg>
<div class="abs chart" style="top:157px;height:197px"><div class="chead"><div class="ctitle">Driver Age</div><svg class="cx" width="11" height="11" viewBox="0 0 11 11"><path d="M1 1 L10 10 M10 1 L1 10" stroke="#b8b8b8" stroke-width="1.4"/></svg></div><svg class="abs" style="left:0;top:0" width="231" height="197"><g fill="#c6dce8" stroke="#a6c3d5" stroke-width="1"><rect x="8.2" y="190.2" width="6" height="0.8"/><rect x="17.2" y="188.1" width="6" height="2.9"/><rect x="25.9" y="174.3" width="6" height="16.7"/><rect x="35.2" y="174.3" width="6" height="16.7"/><rect x="44.4" y="170.1" width="6" height="20.9"/><rect x="53.6" y="172.4" width="6" height="18.6"/><rect x="62.4" y="173.3" width="6" height="17.7"/><rect x="71.6" y="125.0" width="6" height="66.0"/><rect x="80.8" y="119.1" width="6" height="71.9"/><rect x="89.8" y="130.2" width="6" height="60.8"/><rect x="99.2" y="142.3" width="6" height="48.7"/><rect x="108.4" y="148.0" width="6" height="43.0"/><rect x="117.7" y="144.2" width="6" height="46.8"/><rect x="126.9" y="152.3" width="6" height="38.7"/><rect x="135.9" y="152.3" width="6" height="38.7"/><rect x="145.1" y="157.4" width="6" height="33.6"/><rect x="153.7" y="168.6" width="6" height="22.4"/><rect x="163.3" y="174.3" width="6" height="16.7"/><rect x="172.3" y="181.0" width="6" height="10.0"/><rect x="181.1" y="183.3" width="6" height="7.7"/><rect x="190.3" y="185.2" width="6" height="5.8"/><rect x="199.7" y="189.3" width="6" height="1.7"/><rect x="217.5" y="68.3" width="6" height="122.7"/></g></svg></div>
<div class="abs chart" style="top:374px;height:196px"><div class="chead"><div class="ctitle">Injury Status</div><svg class="cx" width="11" height="11" viewBox="0 0 11 11"><path d="M1 1 L10 10 M10 1 L1 10" stroke="#b8b8b8" stroke-width="1.4"/></svg></div><svg class="abs" style="left:0;top:0" width="231" height="196"><g stroke="#fff" stroke-width="2" stroke-linejoin="round"><path d="M115.7 119.7 L115.7 51.7 A64 68 0 0 1 118.5 51.8 Z" fill="#4D5360"/><path d="M115.7 119.7 L118.5 51.8 A64 68 0 0 1 136.4 55.4 Z" fill="#46BFBD"/><path d="M115.7 119.7 L136.4 55.4 A64 68 0 0 1 173.7 148.5 Z" fill="#FDB45C"/><path d="M115.7 119.7 L173.7 148.5 A64 68 0 1 1 70.4 71.6 Z" fill="#949FB1"/><path d="M115.7 119.7 L70.4 71.6 A64 68 0 0 1 114.0 51.7 Z" fill="#F7464A"/><path d="M115.7 119.7 L114.0 51.7 A64 68 0 0 1 115.7 51.7 Z" fill="#F7464A"/></g></svg></div>
<div class="abs chart" style="top:590px;height:250px"><div class="chead"><div class="ctitle">Speed Limit</div><svg class="cx" width="11" height="11" viewBox="0 0 11 11"><path d="M1 1 L10 10 M10 1 L1 10" stroke="#b8b8b8" stroke-width="1.4"/></svg></div><svg class="abs" style="left:0;top:0" width="231" height="250"><path d="M6.7 188.7 C13.1 188.7 16.4 189.1 22.8 188.7 C29.7 188.3 33.0 187.1 39.9 186.7 C46.2 186.3 54.2 191.0 55.7 186.7 C67.2 145.5 64.3 79.8 72.6 70.0 C78.1 63.5 81.1 136.2 90.0 146.0 C94.8 151.3 101.9 103.1 106.8 107.7 C115.1 115.4 112.7 159.1 122.9 176.7 C125.9 181.9 134.2 162.8 140.0 164.6 C147.8 167.1 150.3 187.8 156.9 187.5 C163.9 187.2 167.6 162.5 174.0 163.0 C180.7 163.5 181.8 185.8 189.8 190.0 C194.8 191.0 199.5 181.6 206.7 180.0 C212.8 178.6 216.5 181.5 223.0 182.5 L223.0 200 L6.7 200 Z" fill="#e9f0f4"/><path d="M6.7 188.7 C13.1 188.7 16.4 189.1 22.8 188.7 C29.7 188.3 33.0 187.1 39.9 186.7 C46.2 186.3 54.2 191.0 55.7 186.7 C67.2 145.5 64.3 79.8 72.6 70.0 C78.1 63.5 81.1 136.2 90.0 146.0 C94.8 151.3 101.9 103.1 106.8 107.7 C115.1 115.4 112.7 159.1 122.9 176.7 C125.9 181.9 134.2 162.8 140.0 164.6 C147.8 167.1 150.3 187.8 156.9 187.5 C163.9 187.2 167.6 162.5 174.0 163.0 C180.7 163.5 181.8 185.8 189.8 190.0 C194.8 191.0 199.5 181.6 206.7 180.0 C212.8 178.6 216.5 181.5 223.0 182.5" fill="none" stroke="#9ab8ca" stroke-width="3"/><g fill="#9ab8ca" stroke="#fff" stroke-width="1"><circle cx="6.7" cy="188.7" r="3.6"/><circle cx="22.8" cy="188.7" r="3.6"/><circle cx="39.9" cy="186.7" r="3.6"/><circle cx="55.7" cy="186.7" r="3.6"/><circle cx="72.6" cy="70.0" r="3.6"/><circle cx="90.0" cy="146.0" r="3.6"/><circle cx="106.8" cy="107.7" r="3.6"/><circle cx="122.9" cy="176.7" r="3.6"/><circle cx="140.0" cy="164.6" r="3.6"/><circle cx="156.9" cy="187.5" r="3.6"/><circle cx="174.0" cy="163.0" r="3.6"/><circle cx="189.8" cy="190.0" r="3.6"/><circle cx="206.7" cy="180.0" r="3.6"/><circle cx="223.0" cy="182.5" r="3.6"/></g></svg></div>

<div id="bottom" class="abs"></div>
<div class="abs" style="left:296px;top:800px;font-size:18.7px;line-height:22px;color:#a3a3a3;white-space:nowrap">Crash Count: 2499</div>
<div class="abs btn" style="left:912px;width:111px">Quick Report</div>
<div class="abs btn" style="left:1033px;width:107px">Filter Details</div>
<div id="rline" class="abs"></div>
<div id="bline" class="abs"></div>
</body></html>
